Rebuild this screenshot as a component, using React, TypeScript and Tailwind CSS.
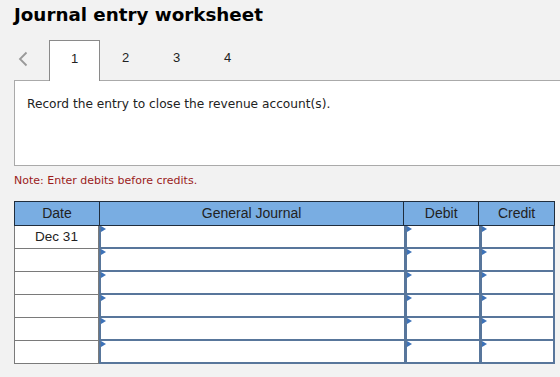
import React from "react";

const cols = [
  { key: "date", label: "Date", w: "w-[85px]" },
  { key: "gj", label: "General Journal", w: "w-[305px]" },
  { key: "debit", label: "Debit", w: "w-[75px]" },
  { key: "credit", label: "Credit", w: "w-[75px]" },
];

const rows = ["Dec 31", "", "", "", "", ""];

function Marker() {
  return (
    <span className="absolute left-0 top-0 w-0 h-0 border-t-[3px] border-b-[3px] border-l-[5px] border-t-transparent border-b-transparent border-l-[#3d72b8]" />
  );
}

function InputCell({ w, extra }: { w: string; extra: string }) {
  return (
    <div className={`relative h-[23px] bg-white border-b-2 border-[#58769b] ${w} ${extra}`}>
      <Marker />
    </div>
  );
}

const App = () => {
  return (
    <div
      className="relative w-[560px] h-[377px] overflow-hidden bg-[#f2f2f2] text-[#222]"
      style={{ fontFamily: '"DejaVu Sans", Verdana, sans-serif' }}
    >
      <h1 className="pl-[14px] pt-[3px] text-[18.3px] leading-[24px] font-bold text-black">
        Journal entry worksheet
      </h1>

      <div className="mt-[13px] flex items-end h-[40px]" style={{ fontFamily: '"Liberation Sans", Arial, sans-serif' }}>
        <div className="w-[49px] h-[40px] flex items-center pl-[18px] pb-[2px]">
          <svg width="10" height="16" viewBox="0 0 10 16">
            <path d="M8.5 1.5 L2 8 L8.5 14.5" fill="none" stroke="#999999" strokeWidth="1.8" />
          </svg>
        </div>
        <div className="relative z-10 w-[51px] h-[41px] -mb-px bg-white border border-b-0 border-[#8a8a8a] flex items-center justify-center pb-[4px] text-[13px]">
          1
        </div>
        {["2", "3", "4"].map(n => (
          <div key={n} className="w-[51px] h-[40px] flex items-center justify-center pb-[4px] text-[13px]">
            {n}
          </div>
        ))}
      </div>

      <div className="ml-[14px] w-[560px] h-[86px] bg-white border border-[#aaaaaa] pl-[12px] pt-[14px] text-[12.2px]">
        Record the entry to close the revenue account(s).
      </div>

      <div className="pl-[14px] pt-[8px] text-[11px] leading-[14px] text-[#9b1b1b]">
        Note: Enter debits before credits.
      </div>

      <div
        className="ml-[14px] mt-[13px] w-[541px]"
        style={{ fontFamily: '"Liberation Sans", Arial, sans-serif' }}
      >
        <div className="flex h-[25px] bg-[#79ade2] border border-[#1f2d3d] text-[14px] text-[#222]">
          {cols.map((c, i) => (
            <div
              key={c.key}
              className={`${c.w} flex items-center justify-center ${i < cols.length - 1 ? "border-r border-[#1f2d3d]" : ""}`}
            >
              {c.label}
            </div>
          ))}
        </div>
        {rows.map((d, r) => (
          <div key={r} className="flex">
            <div className="w-[85px] h-[23px] bg-white border-l border-r border-b border-[#7a7a7a] flex items-center justify-center text-[13.5px] pt-[1px]">
              {d}
            </div>
            <InputCell w="w-[305px]" extra="border-l-2" />
            <InputCell w="w-[75px]" extra="border-l-[3px]" />
            <InputCell w="w-[76px]" extra="border-l-[3px] border-r-2" />
          </div>
        ))}
      </div>
    </div>
  );
};

export default App;
